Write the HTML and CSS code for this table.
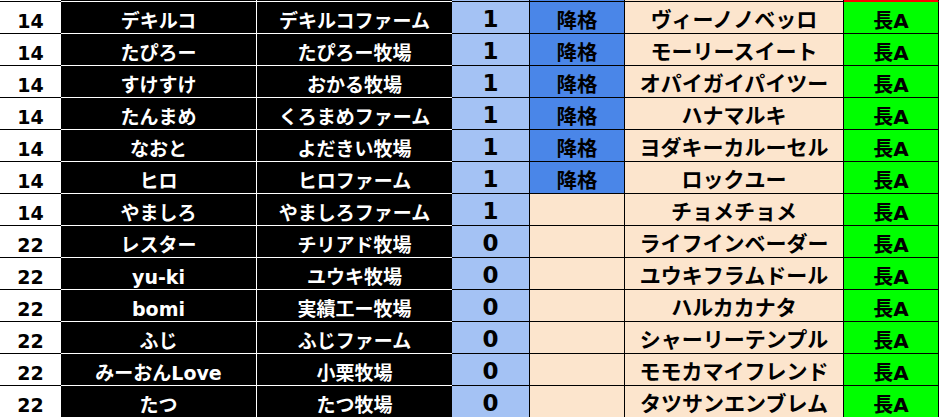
FILE: index.html
```html
<!DOCTYPE html>
<html lang="ja">
<head>
<meta charset="utf-8">
<link rel="stylesheet" href="styles.css">
</head>
<body>
<div class="sheet">
  <div class="row pre">
    <div class="c c1"></div><div class="c c2"></div><div class="c c3"></div><div class="c c4"></div><div class="c c5 blue"></div><div class="c c6"></div><div class="c c7 red"></div>
  </div>
  <div class="row first">
    <div class="c c1">14</div><div class="c c2">デキルコ</div><div class="c c3">デキルコファーム</div><div class="c c4">1</div><div class="c c5 blue">降格</div><div class="c c6">ヴィーノノベッロ</div><div class="c c7">長A</div>
  </div>
  <div class="row">
    <div class="c c1">14</div><div class="c c2">たぴろー</div><div class="c c3">たぴろー牧場</div><div class="c c4">1</div><div class="c c5 blue">降格</div><div class="c c6">モーリースイート</div><div class="c c7">長A</div>
  </div>
  <div class="row">
    <div class="c c1">14</div><div class="c c2">すけすけ</div><div class="c c3">おかる牧場</div><div class="c c4">1</div><div class="c c5 blue">降格</div><div class="c c6">オパイガイパイツー</div><div class="c c7">長A</div>
  </div>
  <div class="row">
    <div class="c c1">14</div><div class="c c2">たんまめ</div><div class="c c3">くろまめファーム</div><div class="c c4">1</div><div class="c c5 blue">降格</div><div class="c c6">ハナマルキ</div><div class="c c7">長A</div>
  </div>
  <div class="row">
    <div class="c c1">14</div><div class="c c2">なおと</div><div class="c c3">よだきい牧場</div><div class="c c4">1</div><div class="c c5 blue">降格</div><div class="c c6">ヨダキーカルーセル</div><div class="c c7">長A</div>
  </div>
  <div class="row">
    <div class="c c1">14</div><div class="c c2">ヒロ</div><div class="c c3">ヒロファーム</div><div class="c c4">1</div><div class="c c5 blue">降格</div><div class="c c6">ロックユー</div><div class="c c7">長A</div>
  </div>
  <div class="row">
    <div class="c c1">14</div><div class="c c2">やましろ</div><div class="c c3">やましろファーム</div><div class="c c4">1</div><div class="c c5"></div><div class="c c6">チョメチョメ</div><div class="c c7">長A</div>
  </div>
  <div class="row">
    <div class="c c1">22</div><div class="c c2">レスター</div><div class="c c3">チリアド牧場</div><div class="c c4">0</div><div class="c c5"></div><div class="c c6">ライフインベーダー</div><div class="c c7">長A</div>
  </div>
  <div class="row">
    <div class="c c1">22</div><div class="c c2">yu-ki</div><div class="c c3">ユウキ牧場</div><div class="c c4">0</div><div class="c c5"></div><div class="c c6">ユウキフラムドール</div><div class="c c7">長A</div>
  </div>
  <div class="row">
    <div class="c c1">22</div><div class="c c2">bomi</div><div class="c c3">実績工ー牧場</div><div class="c c4">0</div><div class="c c5"></div><div class="c c6">ハルカカナタ</div><div class="c c7">長A</div>
  </div>
  <div class="row">
    <div class="c c1">22</div><div class="c c2">ふじ</div><div class="c c3">ふじファーム</div><div class="c c4">0</div><div class="c c5"></div><div class="c c6">シャーリーテンプル</div><div class="c c7">長A</div>
  </div>
  <div class="row">
    <div class="c c1">22</div><div class="c c2">みーおんLove</div><div class="c c3">小栗牧場</div><div class="c c4">0</div><div class="c c5"></div><div class="c c6">モモカマイフレンド</div><div class="c c7">長A</div>
  </div>
  <div class="row">
    <div class="c c1">22</div><div class="c c2">たつ</div><div class="c c3">たつ牧場</div><div class="c c4">0</div><div class="c c5"></div><div class="c c6">タツサンエンブレム</div><div class="c c7">長A</div>
  </div>
</div>
</body>
</html>
```

FILE: styles.css
```css
html, body {
  margin: 0;
  padding: 0;
  background: #ffffff;
}
body {
  width: 940px;
  height: 417px;
  overflow: hidden;
  font-family: "DejaVu Sans", "Noto Sans CJK JP", sans-serif;
  font-weight: 700;
}
.sheet {
  display: flex;
  flex-direction: column;
}
.row {
  display: grid;
  grid-template-columns: 61px 196px 195px 78px 95px 219px 95px;
  height: 32px;
}
.row.pre {
  height: 1px;
}
.c {
  box-sizing: border-box;
  display: flex;
  justify-content: center;
  align-items: flex-end;
  padding-bottom: 2px;
  line-height: 1;
  white-space: nowrap;
  border-top: 1px solid #000;
  color: #000;
  overflow: visible;
}
.pre .c {
  border-top: 0;
  padding: 0;
}
.c1 {
  background: #ffffff;
  font-size: 19px;
}
.c2, .c3 {
  background: #000000;
  color: #ffffff;
  border-top-color: #ffffff;
  font-size: 19px;
}
.c2 {
  border-right: 1px solid #ffffff;
}
.c4 {
  background: #a4c2f4;
  font-size: 23px;
  border-right: 1px solid #000;
}
.c5 {
  background: #fce5cd;
  font-size: 20.5px;
  border-right: 1px solid #000;
}
.c5.blue {
  background: #4a86e8;
}
.c6 {
  background: #fce5cd;
  font-size: 21px;
  border-right: 1px solid #000;
}
.c7 {
  background: #00ff00;
  font-size: 20px;
  border-right: 1px solid #000;
}
.c7.red {
  background: #ff0000;
}
.first .c7 {
  border-top-color: #ff0000;
}
```
